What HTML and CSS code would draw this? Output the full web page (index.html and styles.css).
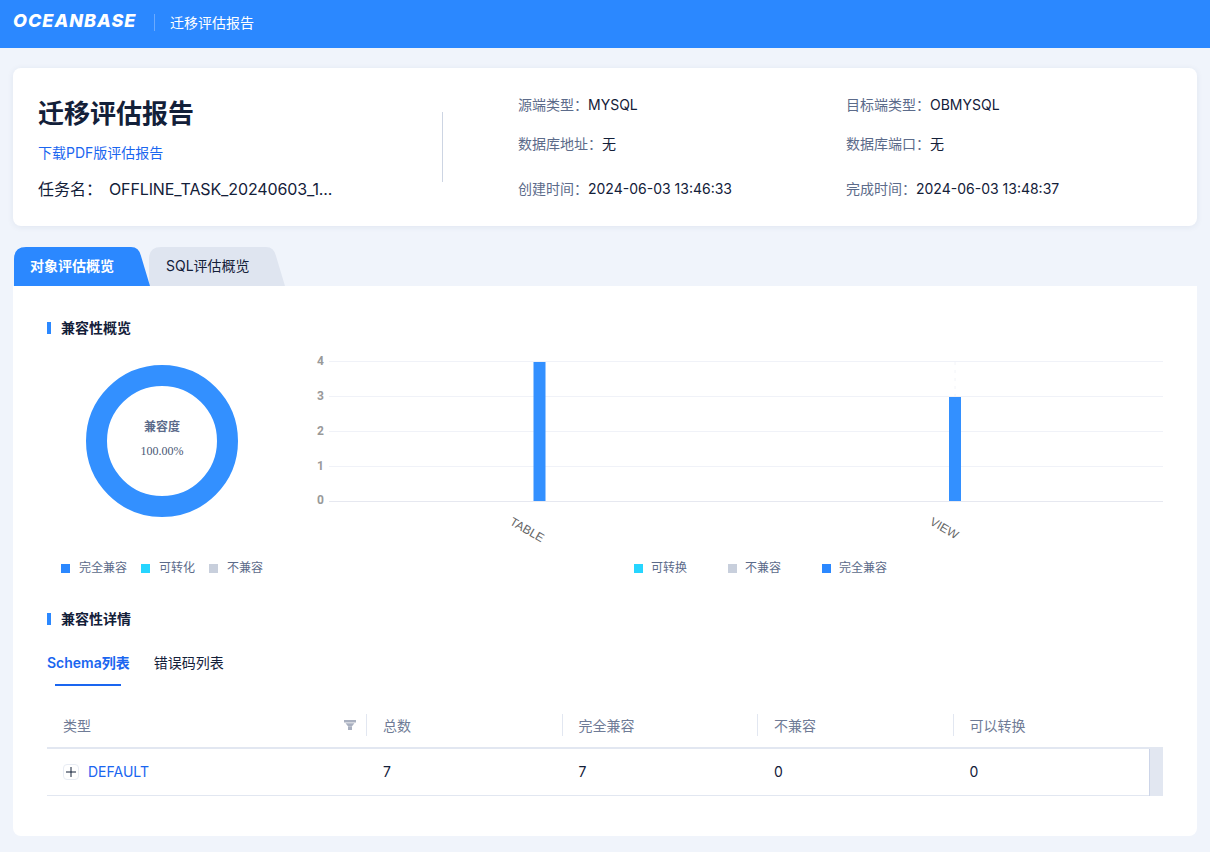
FILE: index.html
```html
<!DOCTYPE html>
<html lang="zh-CN">
<head>
    <meta charset="UTF-8">
    <meta name="viewport" content="width=device-width, initial-scale=1.0">
    <title>迁移评估报告</title>
    <link rel="stylesheet" href="styles.css">
</head>
<body>
    <header class="topbar">
        <span class="logo">OCEANBASE</span>
        <span class="topbar-title">迁移评估报告</span>
    </header>

    <main class="page">
        <section class="summary">
            <div class="summary-left">
                <h1>迁移评估报告</h1>
                <a class="download" href="#">下载PDF版评估报告</a>
                <div class="task"><span class="task-label">任务名：</span><span class="task-name">OFFLINE_TASK_20240603_1...</span></div>
            </div>
            <div class="summary-meta">
                <div class="meta"><span>源端类型：</span>MYSQL</div>
                <div class="meta"><span>目标端类型：</span>OBMYSQL</div>
                <div class="meta"><span>数据库地址：</span>无</div>
                <div class="meta"><span>数据库端口：</span>无</div>
                <div class="meta"><span>创建时间：</span>2024-06-03 13:46:33</div>
                <div class="meta"><span>完成时间：</span>2024-06-03 13:48:37</div>
            </div>
        </section>

        <nav class="tabs">
            <div class="tab active">对象评估概览</div>
            <div class="tab">SQL评估概览</div>
        </nav>

        <section class="panel">
            <h2 class="section-title">兼容性概览</h2>

            <div class="charts">
                <div class="donut-box">
                    <svg class="donut" width="230" height="160" viewBox="0 0 230 160">
                        <circle cx="115" cy="80" r="65.5" fill="none" stroke="#3390ff" stroke-width="21"/>
                        <text x="115" y="70" text-anchor="middle" class="donut-label">兼容度</text>
                        <text x="115" y="94" text-anchor="middle" class="donut-value">100.00%</text>
                    </svg>
                    <ul class="legend legend-left">
                        <li><i class="dot blue"></i>完全兼容</li>
                        <li><i class="dot cyan"></i>可转化</li>
                        <li><i class="dot grey"></i>不兼容</li>
                    </ul>
                </div>

                <div class="bar-box">
                    <svg class="bars" width="860" height="196" viewBox="0 -6 860 196">
                        <g class="grid">
                            <line x1="26" x2="860" y1="1.5" y2="1.5"/>
                            <line x1="26" x2="860" y1="36.5" y2="36.5"/>
                            <line x1="26" x2="860" y1="71.5" y2="71.5"/>
                            <line x1="26" x2="860" y1="106.5" y2="106.5"/>
                            <line class="axis" x1="26" x2="860" y1="141.5" y2="141.5"/>
                        </g>
                        <g class="ticks">
                            <text x="14" y="5">4</text>
                            <text x="14" y="40">3</text>
                            <text x="14" y="75">2</text>
                            <text x="14" y="110">1</text>
                            <text x="14" y="144">0</text>
                        </g>
                        <rect x="230.5" y="2" width="12" height="139" fill="#3390ff"/>
                        <line class="ghost" x1="652" x2="652" y1="2" y2="36"/>
                        <rect x="646" y="37" width="12" height="104" fill="#3390ff"/>
                        <text class="cat" transform="translate(206 164) rotate(30)">TABLE</text>
                        <text class="cat" transform="translate(626 164) rotate(30)">VIEW</text>
                    </svg>
                    <ul class="legend legend-right">
                        <li><i class="dot cyan"></i>可转换</li>
                        <li><i class="dot grey"></i>不兼容</li>
                        <li><i class="dot blue"></i>完全兼容</li>
                    </ul>
                </div>
            </div>

            <h2 class="section-title second">兼容性详情</h2>

            <div class="subtabs">
                <div class="subtab active">Schema列表</div>
                <div class="subtab">错误码列表</div>
            </div>

            <div class="table-wrap">
                <table>
                    <colgroup>
                        <col class="col-type">
                        <col class="col-num">
                        <col class="col-num">
                        <col class="col-num">
                        <col>
                    </colgroup>
                    <thead>
                        <tr>
                            <th>
                                <div class="th-type">类型
                                    <svg width="12" height="10" viewBox="0 0 12 10"><path d="M0 0h12v2.6H0zM1.5 3.2h9L8 6.2H4zM4 6.6h4V10H4z" fill="#a9b0c0"/></svg>
                                </div>
                            </th>
                            <th>总数</th>
                            <th>完全兼容</th>
                            <th>不兼容</th>
                            <th>可以转换</th>
                        </tr>
                    </thead>
                    <tbody>
                        <tr>
                            <td>
                                <div class="cell-name">
                                    <span class="expand"><svg width="10" height="10" viewBox="0 0 10 10"><path d="M5 0v10M0 5h10" stroke="#132039" stroke-width="1"/></svg></span>
                                    <a class="schema" href="#">DEFAULT</a>
                                </div>
                            </td>
                            <td>7</td>
                            <td>7</td>
                            <td>0</td>
                            <td>0</td>
                        </tr>
                    </tbody>
                </table>
                <div class="scroll-stub"></div>
            </div>
        </section>
    </main>
</body>
</html>
```

FILE: styles.css
```css
* {
    box-sizing: border-box;
}
body {
    margin: 0;
    height: 852px;
    overflow: hidden;
    background-color: #f0f4fb;
    color: #132039;
    font-family: Inter, "Noto Sans CJK SC", sans-serif;
    font-size: 14px;
}
.topbar {
    height: 48px;
    padding: 0 0 4px 13px;
    display: flex;
    align-items: center;
    background-color: #2b88ff;
    color: #fff;
}
.logo {
    width: 125px;
    margin-bottom: 4px;
    font-size: 18px;
    font-weight: 800;
    font-style: italic;
    letter-spacing: 1px;
    white-space: nowrap;
}
.topbar-title {
    margin-left: 16px;
    padding-left: 15px;
    height: 17px;
    line-height: 17px;
    border-left: 1px solid #6aaaff;
}

.page {
    padding: 20px 13px 0;
}
.summary {
    height: 158px;
    display: flex;
    background-color: #fff;
    border-radius: 8px;
    box-shadow: 0 1px 6px rgba(40, 70, 120, 0.08);
}
.summary-left {
    width: 430px;
    padding: 27px 0 0 25px;
    position: relative;
}
.summary-left::after {
    content: "";
    position: absolute;
    right: 0;
    top: 44px;
    height: 70px;
    width: 1px;
    background-color: #cdd5e3;
}
h1 {
    margin: 0;
    padding-top: 2px;
    font-size: 26px;
    line-height: 34px;
    font-weight: 600;
}
.download {
    display: block;
    margin-top: 12px;
    line-height: 20px;
    color: #1a66f0;
    text-decoration: none;
}
.task {
    display: flex;
    margin-top: 15px;
    line-height: 22px;
    font-size: 16px;
}
.task-label {
    width: 71px;
}
.task-name {
    letter-spacing: -0.12px;
}
.summary-meta {
    flex: 1;
    padding: 27px 0 0 75px;
    display: grid;
    grid-template-columns: 328px 1fr;
    grid-template-rows: 39px 45px 20px;
    align-content: start;
}
.meta {
    line-height: 20px;
}
.meta span {
    color: #5c6b8a;
}

.tabs {
    display: flex;
    height: 40px;
    margin-top: 20px;
    padding: 1px 0 0 1px;
}
.tab {
    width: 136px;
    margin-left: -1px;
    padding: 8px 0 0 17px;
    line-height: 22px;
    background-color: #dfe5f0;
    clip-path: path("M0 39 V12 Q0 0 12 0 H117 Q125 0 127 9 L136 39 Z");
}
.tab.active {
    position: relative;
    z-index: 1;
    margin-left: 0;
    padding-left: 16px;
    background-color: #2b88ff;
    color: #fff;
    font-weight: 600;
}

.panel {
    height: 550px;
    padding: 32px 34px 0;
    background-color: #fff;
    border-radius: 0 0 8px 8px;
}
.section-title {
    margin: 0;
    padding-left: 14px;
    height: 20px;
    line-height: 20px;
    font-size: 14px;
    font-weight: 600;
    position: relative;
}
.section-title::before {
    content: "";
    position: absolute;
    left: 0;
    top: 4px;
    width: 4px;
    height: 12px;
    background-color: #2b88ff;
}
.section-title.second {
    margin-top: 32px;
}

.charts {
    display: flex;
    height: 239px;
}
.donut-box {
    width: 256px;
    flex: none;
}
.donut {
    display: block;
    margin-top: 23px;
}
.donut-label {
    font-size: 12px;
    font-weight: 600;
    fill: #5c6b8a;
}
.donut-value {
    font-family: "Liberation Serif", serif;
    font-size: 12px;
    fill: #4a5876;
}
.legend {
    display: flex;
    margin: 0;
    padding: 0;
    list-style: none;
    font-size: 12px;
    line-height: 18px;
    color: #5c6b8a;
}
.legend li {
    display: flex;
    align-items: center;
}
.dot {
    display: block;
    width: 9px;
    height: 9px;
}
.dot.blue {
    background-color: #2b88ff;
}
.dot.cyan {
    background-color: #26d5ff;
}
.dot.grey {
    background-color: #c8cfdc;
}
.legend-left {
    margin-top: 38px;
    padding-left: 14px;
    gap: 14px;
}
.legend-left .dot {
    margin-right: 9px;
}
.bar-box {
    margin-top: 16px;
    width: 860px;
    flex: none;
}
.bars {
    display: block;
}
.legend-right {
    justify-content: center;
    margin-top: 9px;
    padding-left: 55px;
    gap: 41px;
}
.legend-right .dot {
    margin-right: 8px;
}
.grid line {
    stroke: #f0f2f8;
    stroke-width: 1;
}
.grid .axis {
    stroke: #e6e8f0;
}
.ghost {
    stroke: #f2f4f8;
    stroke-dasharray: 3 5;
}
.ticks text {
    font-family: Roboto, sans-serif;
    font-size: 12px;
    font-weight: 700;
    fill: #999;
}
.cat {
    font-family: "Liberation Sans", sans-serif;
    font-size: 12px;
    fill: #666;
}

.subtabs {
    display: flex;
    margin-top: 19px;
    height: 43px;
    gap: 24px;
    line-height: 30px;
}
.subtab {
    position: relative;
}
.subtab.active {
    color: #1a66f0;
    font-weight: 600;
}
.subtab.active::after {
    content: "";
    position: absolute;
    left: 8px;
    top: 36px;
    width: 66px;
    height: 2px;
    background-color: #1a66f0;
}

.table-wrap {
    position: relative;
    margin-top: 11px;
    width: 1116px;
}
table {
    width: 100%;
    table-layout: fixed;
    border-collapse: collapse;
}
.col-type {
    width: 320px;
}
.col-num {
    width: 195.5px;
}
th {
    height: 46px;
    padding: 0 0 0 16px;
    text-align: left;
    font-weight: 400;
    color: #6f7b96;
    border-bottom: 2px solid #e2e7f1;
    position: relative;
}
th + th::before {
    content: "";
    position: absolute;
    left: -1px;
    top: 12px;
    height: 22px;
    width: 1px;
    background-color: #e2e7f1;
}
.th-type {
    display: flex;
    justify-content: space-between;
    align-items: center;
    padding-right: 11px;
}
td {
    height: 47px;
    padding: 0 0 0 16px;
    border-bottom: 1px solid #e2e7f1;
}
.cell-name {
    display: flex;
    align-items: center;
}
.expand {
    display: flex;
    align-items: center;
    justify-content: center;
    width: 16px;
    height: 16px;
    margin-right: 9px;
    border: 1px solid #e8ecf4;
    border-radius: 4px;
}
.schema {
    color: #1a66f0;
    text-decoration: none;
}
.scroll-stub {
    position: absolute;
    right: 0;
    bottom: 0;
    width: 14px;
    height: 47px;
    background-color: #e2e7f1;
    border-left: 1px solid #cdd5e8;
}
```
